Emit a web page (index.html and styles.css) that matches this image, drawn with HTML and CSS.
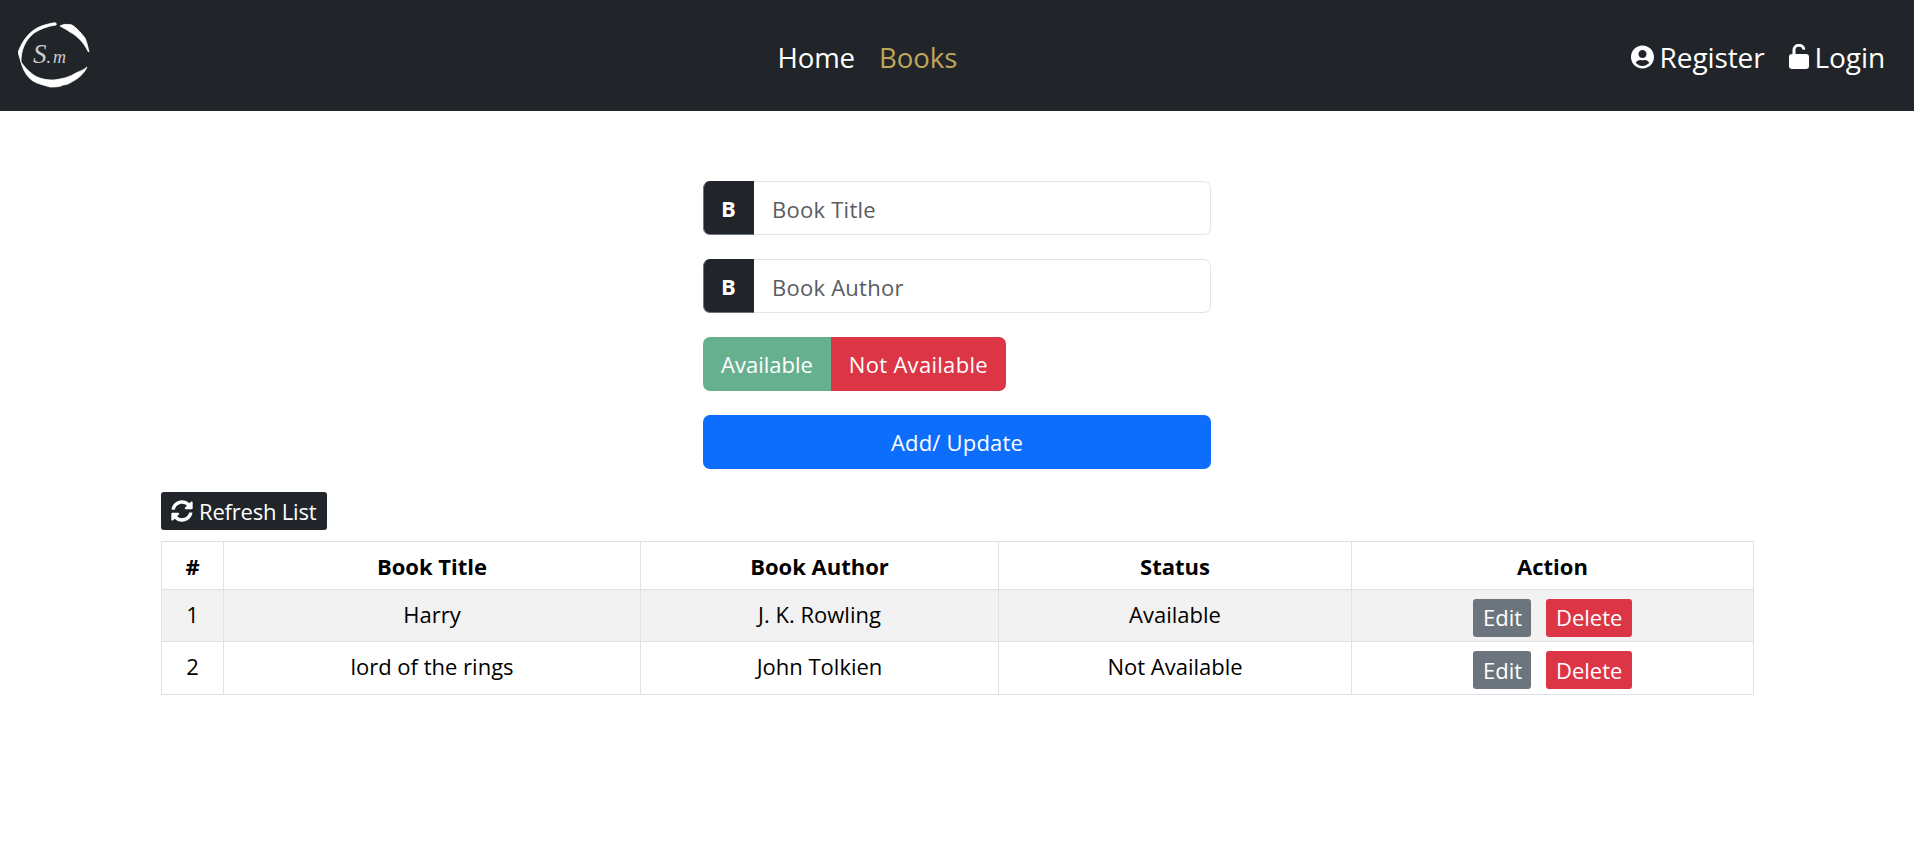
FILE: index.html
```html
<!DOCTYPE html>
<html lang="en">
<head>
<meta charset="utf-8">
<title>Books</title>
<link rel="stylesheet" href="styles.css">
</head>
<body>
<nav class="navbar">
  <a class="brand" href="#">
    <svg class="logo" viewBox="18 20 72 72" aria-hidden="true">
      <path class="ring" d="M19 50 C22 42 28 33 37 28 C43 25 48 24 53 23 C56 22 57 24 56 25 C48 26 40 29 34 33 C28 38 24 44 22 52 C21 56 21 60 21 62 L18 52 Z"/>
      <path class="ring" d="M60 26 C63 24 68 24 72 25 C77 28 82 34 85 38 C87 43 88 47 89 52 C88 52 87 49 85 46 C82 41 76 35 70 32 C66 29 63 28 60 26 Z"/>
      <path class="ring" d="M21 62 C24 66 27 70 31 73 C38 79 46 80 54 80 C62 79 70 77 76 73 C80 71 84 70 87 67 C85 72 80 77 75 80 C71 82 68 85 63 85 C60 87 55 87 50 87 C44 85 38 84 33 81 C27 77 23 70 21 62 Z"/>
      <text class="logo-text" x="33" y="63">S<tspan class="logo-small">.m</tspan></text>
    </svg>
  </a>
  <ul class="nav-center">
    <li><a class="nav-link" href="#">Home</a></li>
    <li><a class="nav-link nav-active" href="#">Books</a></li>
  </ul>
  <ul class="nav-right">
    <li><a class="nav-link nav-icon-link" href="#">
      <svg class="nav-icon" viewBox="0 0 496 512" aria-hidden="true"><path d="M248 8C111 8 0 119 0 256s111 248 248 248 248-111 248-248S385 8 248 8zm0 96c48.6 0 88 39.4 88 88s-39.4 88-88 88-88-39.4-88-88 39.4-88 88-88zm0 344c-58.7 0-111.3-26.6-146.5-68.2 18.8-35.4 55.6-59.8 98.5-59.8 2.4 0 4.8.4 7.1 1.1 13 4.2 26.6 6.9 40.9 6.9 14.3 0 28-2.7 40.9-6.9 2.3-.7 4.7-1.1 7.1-1.1 42.9 0 79.7 24.4 98.5 59.8C359.3 421.4 306.7 448 248 448z"/></svg>
      Register</a></li>
    <li><a class="nav-link nav-icon-link" href="#">
      <svg class="nav-lock" viewBox="0 0 20 25" aria-hidden="true"><path class="lock-shackle" d="M5 12 V7 A5 5 0 0 1 15 5.6"/><rect class="lock-body" x="0" y="10" width="20" height="15" rx="3"/></svg>
      Login</a></li>
  </ul>
</nav>

<main class="container">
  <form class="book-form">
    <div class="input-group">
      <span class="addon">B</span>
      <input class="field" type="text" placeholder="Book Title">
    </div>
    <div class="input-group">
      <span class="addon">B</span>
      <input class="field" type="text" placeholder="Book Author">
    </div>
    <div class="btn-group">
      <button class="btn seg seg-green" type="button">Available</button>
      <button class="btn seg seg-red" type="button">Not Available</button>
    </div>
    <button class="btn submit" type="button">Add/ Update</button>
  </form>

  <button class="btn-sm refresh" type="button">
    <svg class="refresh-icon" viewBox="0 0 512 512" aria-hidden="true"><path d="M370.72 133.28C339.458 104.008 298.888 87.962 255.848 88c-77.458.068-144.328 53.178-162.791 126.85-1.344 5.363-6.122 9.15-11.651 9.15H24.103c-7.498 0-13.194-6.807-11.807-14.176C33.933 94.924 134.813 8 256 8c66.448 0 126.791 26.136 171.315 68.685L463.03 40.97C478.149 25.851 504 36.559 504 57.941V192c0 13.255-10.745 24-24 24H345.941c-21.382 0-32.09-25.851-16.971-40.971l41.75-41.749zM32 296h134.059c21.382 0 32.09 25.851 16.971 40.971l-41.75 41.75c31.262 29.273 71.835 45.319 114.876 45.28 77.418-.07 144.315-53.144 162.787-126.849 1.344-5.363 6.122-9.15 11.651-9.15h57.304c7.498 0 13.194 6.807 11.807 14.176C478.067 417.076 377.187 504 256 504c-66.448 0-126.791-26.136-171.315-68.685L48.97 471.03C33.851 486.149 8 475.441 8 454.059V320c0-13.255 10.745-24 24-24z"/></svg>
    Refresh List
  </button>

  <table class="books">
    <colgroup>
      <col class="c-num"><col class="c-title"><col class="c-author"><col class="c-status"><col class="c-action">
    </colgroup>
    <thead>
      <tr><th>#</th><th>Book Title</th><th>Book Author</th><th>Status</th><th>Action</th></tr>
    </thead>
    <tbody>
      <tr class="striped">
        <td>1</td><td>Harry</td><td>J. K. Rowling</td><td>Available</td>
        <td class="actions"><button class="btn-sm edit" type="button">Edit</button><button class="btn-sm del" type="button">Delete</button></td>
      </tr>
      <tr>
        <td>2</td><td>lord of the rings</td><td>John Tolkien</td><td>Not Available</td>
        <td class="actions"><button class="btn-sm edit" type="button">Edit</button><button class="btn-sm del" type="button">Delete</button></td>
      </tr>
    </tbody>
  </table>
</main>
</body>
</html>
```

FILE: styles.css
```css
* { box-sizing: border-box; }
html, body { margin: 0; padding: 0; }
body {
  background: #fff;
  color: #000;
  font-family: "Open Sans", "Noto Sans", sans-serif;
  font-size: 22px;
  padding-right: 6px;
}
a { text-decoration: none; color: inherit; }
ul { list-style: none; margin: 0; padding: 0; }

.navbar {
  height: 111px;
  background: #212529;
  display: flex;
  align-items: center;
  justify-content: space-between;
  padding: 0 29px 0 18px;
}
.brand { display: flex; }
.logo { width: 72px; height: 72px; display: block; }
.ring { fill: #fff; stroke: #fff; stroke-width: 0.8; }
.logo-text { fill: #ccc; font-family: "Liberation Serif", serif; font-style: italic; font-size: 27px; }
.logo-small { font-size: 18px; letter-spacing: 2px; }
.nav-center, .nav-right { display: flex; align-items: center; padding-top: 2px; }
.nav-center { gap: 24px; margin-left: 14px; }
.nav-right { gap: 24px; }
.nav-link { color: #fff; font-size: 28px; line-height: 38px; letter-spacing: -0.1px; }
.nav-center .nav-link { font-size: 27.6px; }
.nav-active { color: #bfa55a; }
.nav-icon-link { display: flex; align-items: center; gap: 6px; }
.nav-icon { width: 23px; height: 24px; fill: #fff; flex: none; }
.nav-lock { width: 20px; height: 25px; flex: none; }
.lock-body { fill: #fff; }
.lock-shackle { fill: none; stroke: #fff; stroke-width: 3; }

.container { width: 1592px; margin: 0 auto; padding-top: 70px; }

.book-form { width: 508px; margin: 0 auto; display: flex; flex-direction: column; gap: 23.6px; align-items: flex-start; }
.input-group { display: flex; width: 100%; height: 54.3px; }
.addon {
  width: 51px;
  flex: none;
  background: #212529;
  color: #fff;
  font-weight: 700;
  font-size: 22px;
  display: flex;
  align-items: center;
  justify-content: center;
  border: 1px solid #212529;
  border-left-color: #6c757d;
  border-bottom-color: #6c757d;
  border-radius: 7px 0 0 7px;
}
.field {
  flex: 1;
  min-width: 0;
  border: 1px solid #e4e5e8;
  border-left: 0;
  border-radius: 0 7px 7px 0;
  padding: 2px 18px 0;
  font: inherit;
  letter-spacing: 0.25px;
  color: #212529;
  outline: none;
  background: #fff;
}
.field::placeholder { color: #595c5f; opacity: 1; }

.btn {
  border: 0;
  height: 54.3px;
  color: #fff;
  font: inherit;
  letter-spacing: 0.2px;
  cursor: pointer;
  padding: 0 18px;
}
.btn-group { display: flex; }
.seg-green { background: #67b08f; border-radius: 7px 0 0 7px; letter-spacing: 0; }
.seg-red { background: #dc3545; border-radius: 0 7px 7px 0; letter-spacing: 0.3px; }
.submit { width: 100%; background: #0d6efd; border-radius: 7px; }

.btn-sm {
  border: 0;
  height: 38px;
  border-radius: 3px;
  color: #fff;
  font: inherit;
  padding: 0 10px;
  cursor: pointer;
}
.refresh {
  display: flex;
  align-items: center;
  gap: 6px;
  margin-top: 23px;
  background: #212529;
  width: 166px;
  white-space: nowrap;
  letter-spacing: -0.2px;
}
.refresh-icon { width: 22px; height: 22px; fill: #fff; flex: none; }

.books {
  width: 100%;
  margin-top: 11px;
  border-collapse: collapse;
  table-layout: fixed;
  border: 1px solid #dee2e6;
}
.c-num { width: 62px; }
.c-title { width: 417px; }
.c-author { width: 358px; }
.c-status { width: 353px; }
.c-action { width: 402px; }
.books th, .books td {
  border: 1px solid #dee2e6;
  text-align: center;
  vertical-align: top;
  padding: 10px 8px 8px;
  line-height: 29px;
}
.books th { height: 47px; font-weight: 700; color: #000; }
.books td { height: 52.5px; padding-top: 10px; padding-bottom: 0; }
.striped td { background: #f2f2f2; }
.books td.actions { padding: 9px 8px 0; }
.actions { white-space: nowrap; }
.edit { background: #6c757d; width: 58px; }
.del { background: #dc3545; width: 86px; margin-left: 15px; }
```
